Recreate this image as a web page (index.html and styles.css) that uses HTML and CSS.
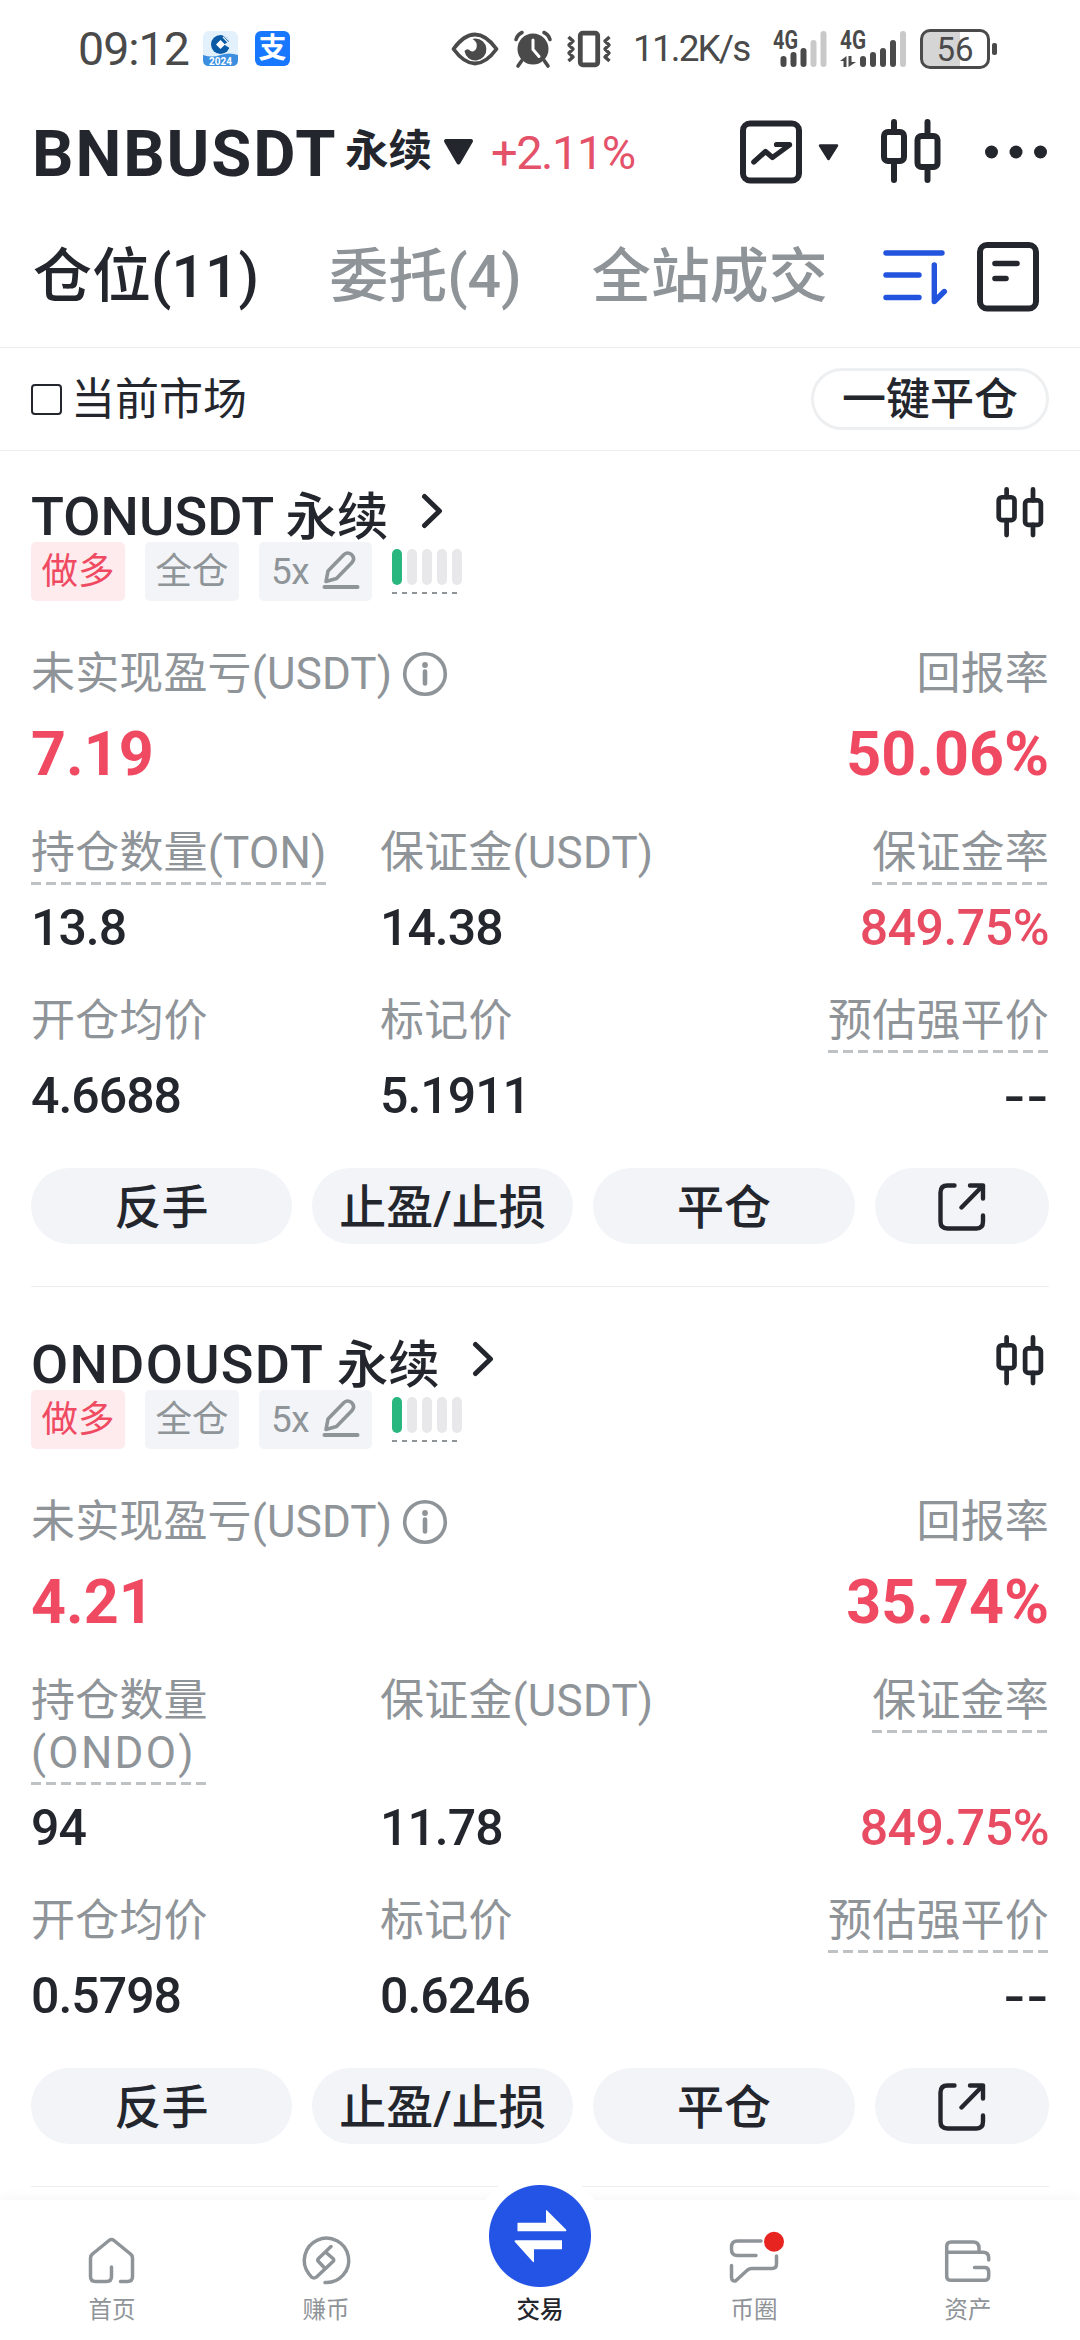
FILE: index.html
```html
<!DOCTYPE html>
<html lang="zh-CN">
<head>
<meta charset="utf-8">
<title>BNBUSDT 永续</title>
<link rel="stylesheet" href="styles.css">
</head>
<body>
<svg class="sprite" width="0" height="0" aria-hidden="true">
  <symbol id="candles" viewBox="0 0 60 66">
    <g fill="none" stroke="currentColor" stroke-width="6" stroke-linecap="round">
      <rect x="3" y="13" width="20" height="29" rx="4"/><path d="M13 3v10M13 42v19"/>
      <rect x="36.500" y="17" width="20" height="31" rx="4"/><path d="M46.500 3v14M46.500 48v13"/>
    </g>
  </symbol>
  <symbol id="chevron" viewBox="0 0 22 36"><path d="M3.500 3.500L18.500 18 3.500 32.500" fill="none" stroke="currentColor" stroke-width="5" stroke-linecap="round" stroke-linejoin="round"/></symbol>
  <symbol id="pencil" viewBox="0 0 38 40">
    <g fill="none" stroke="currentColor" stroke-linecap="round" stroke-linejoin="round">
      <path d="M4 31.500L6 21 22 4.500q3.500-3 7.500 0 4 4 .5 8L14.500 28.500z" stroke-width="3.600"/><path d="M2.500 37h33" stroke-width="4"/>
    </g>
  </symbol>
  <symbol id="info" viewBox="0 0 46 46">
    <circle cx="23" cy="23" r="20.300" fill="none" stroke="currentColor" stroke-width="3.600"/>
    <circle cx="23" cy="14" r="2.900" fill="currentColor"/><path d="M23 20.500v12" stroke="currentColor" stroke-width="4.600" stroke-linecap="round"/>
  </symbol>
  <symbol id="export" viewBox="0 0 48 48">
    <g fill="none" stroke="currentColor" stroke-width="4.400" stroke-linecap="round" stroke-linejoin="round">
      <path d="M16.500 2.500H9.500q-7 0-7 7v29q0 7 7 7h29q6.500 0 6.500-7V32.500M32 2.500h13v13M45 2.500L23.500 24.500"/>
    </g>
  </symbol>
</svg>

<div class="screen">
  <header class="status">
    <span class="clock">09:12</span>
    <svg class="app-bank" width="35" height="35" viewBox="0 0 35 35">
      <rect width="35" height="35" rx="6" fill="#e3f1fd"/><path d="M0 24q9 3 17.500 0t17.500 0v5q0 6-6 6H6q-6 0-6-6z" fill="#3c8fe0"/>
      <circle cx="17.500" cy="13.500" r="9.500" fill="#0b5aa6"/><path d="M20 6l7 7.500M20 3.500l7 7" stroke="#e3f1fd" stroke-width="1.200"/><path d="M21 13.500l8-5v10z" fill="#e3f1fd"/><path d="M17.500 9l4.500 4.500-4.500 4.500-4.500-4.500z" fill="#fff"/>
      <text x="17.500" y="33.500" text-anchor="middle" class="app-year">2024</text>
    </svg>
    <span class="app-pay">支</span>
    <div class="status-right">
      <svg width="48" height="36" viewBox="0 0 48 36"><path d="M2.500 18Q13 3.500 24 3.500T45.500 18Q35 32.500 24 32.500T2.500 18z" fill="none" stroke="#4a4a4a" stroke-width="3.800" stroke-linejoin="round"/><path d="M24 7.500a11 11 0 1 1-10.500 12.500q3-3.500 6 0 4 1.500 6-3 1.500-6-4-9z" fill="#4a4a4a"/></svg>
      <svg class="alarm" width="38" height="38" viewBox="0 0 38 38"><circle cx="19" cy="19" r="15.500" fill="#4a4a4a"/><path d="M19 10v9.500l6 7" fill="none" stroke="#fff" stroke-width="3" stroke-linecap="round"/><path d="M2 9.500q1.500-5 6-7M36 9.500q-1.500-5-6-7M7.500 31l-3.500 5M30.500 31l3.500 5" fill="none" stroke="#4a4a4a" stroke-width="3.600" stroke-linecap="round"/></svg>
      <svg class="vibrate" width="46" height="38" viewBox="0 0 46 38"><g fill="none" stroke="#4a4a4a" stroke-linejoin="round"><rect x="14.300" y="3.200" width="17.400" height="31.600" rx="2.500" stroke-width="4.800"/><path d="M2.500 7l4.500 4-4 4 4 4-4 4 4 4-4.500 4M43.500 7l-4.500 4 4 4-4 4 4 4-4 4 4.500 4" stroke-width="3.400"/></g></svg>
      <span class="speed">11.2K/s</span>
      <svg class="signal" width="54" height="38" viewBox="0 0 54 38"><text x="0" y="19" class="net" textLength="25" lengthAdjust="spacingAndGlyphs">4G</text>
        <g stroke="#4a4a4a" stroke-width="6" stroke-linecap="round"><path d="M10.500 29v5M20.500 25v9M30.500 21v13"/><path d="M40.500 13v21M50.500 4v30" stroke="#c9c9c9"/></g></svg>
      <svg class="signal-two" width="66" height="38" viewBox="0 0 66 38"><text x="0" y="19" class="net" textLength="26" lengthAdjust="spacingAndGlyphs">4G</text>
        <path d="M0 31l6.500-5v11H3.500v-6zM8.500 26h3v6H16l-7.500 5z" fill="#4a4a4a"/>
        <g stroke="#4a4a4a" stroke-width="6" stroke-linecap="round"><path d="M23 29v5M33 25v9M43 21v13M53 13v21"/><path d="M63 4v30" stroke="#c9c9c9"/></g></svg>
      <span class="battery">56</span><i class="battery-cap"></i>
    </div>
  </header>

  <div class="pair">
    <span class="pair-name">BNBUSDT</span><span class="pair-type">永续</span>
    <svg class="pair-caret" width="31" height="26" viewBox="0 0 31 26"><path d="M3 2h25L15.500 23.500z" fill="#24262d" stroke="#24262d" stroke-width="4" stroke-linejoin="round"/></svg>
    <span class="pair-change">+2.11%</span>
    <div class="pair-tools">
      <svg width="64" height="64" viewBox="0 0 64 64"><g fill="none" stroke="#24262d" stroke-linecap="round" stroke-linejoin="round"><rect x="4" y="3.500" width="56" height="57" rx="7" stroke-width="6"/><path d="M14.800 42l11.700-10.500 7 6L50.500 25M37.500 24.500h13" stroke-width="5.200"/></g></svg>
      <svg class="mini-caret" width="21" height="17" viewBox="0 0 21 17"><path d="M2 1.500h17L10.500 15z" fill="#24262d" stroke="#24262d" stroke-width="2.500" stroke-linejoin="round"/></svg>
      <svg class="tool-candles" width="60" height="66"><use href="#candles"/></svg>
      <svg class="tool-more" width="62" height="14" viewBox="0 0 62 14"><g fill="#24262d"><circle cx="6.500" cy="7" r="6.500"/><circle cx="31" cy="7" r="6.500"/><circle cx="55.500" cy="7" r="6.500"/></g></svg>
    </div>
  </div>

  <nav class="tabs">
    <span class="tab tab-on">仓位(11)</span><span class="tab">委托(4)</span><span class="tab">全站成交</span>
    <div class="tab-tools">
      <svg width="64" height="56" viewBox="0 0 64 56"><path d="M3 4h56M3 26h33M3 48.500h33M51.300 16v36.500l10-10" fill="none" stroke="#2354dd" stroke-width="5.400" stroke-linecap="round" stroke-linejoin="round"/></svg>
      <svg width="62" height="70" viewBox="0 0 62 70"><g fill="none" stroke="#24262d" stroke-linecap="round"><rect x="3" y="3" width="56" height="63.500" rx="7" stroke-width="6"/><path d="M18 21.500h22M18 36.500h11" stroke-width="5.600"/></g></svg>
    </div>
  </nav>

  <div class="filter">
    <i class="checkbox"></i><span class="filter-label">当前市场</span>
    <button class="close-all">一键平仓</button>
  </div>

  <main class="positions">
    <section class="card">
      <div class="card-head"><h2>TONUSDT <span class="kind">永续</span></h2><svg class="go" width="22" height="36"><use href="#chevron"/></svg><svg class="head-candles" width="48" height="52"><use href="#candles"/></svg></div>
      <div class="tags"><span class="tag tag-long">做多</span><span class="tag">全仓</span><span class="tag tag-lever">5x<svg width="38" height="40"><use href="#pencil"/></svg></span>
        <div class="risk"><div class="risk-bars"><i class="on"></i><i></i><i></i><i></i><i></i></div></div></div>
      <div class="line pnl-label"><span>未实现盈亏(USDT)</span><svg width="46" height="46"><use href="#info"/></svg><span class="end">回报率</span></div>
      <div class="line pnl"><span>7.19</span><span class="end">50.06%</span></div>
      <div class="facts facts-first">
        <span class="label"><b class="hint">持仓数量(TON)</b></span><span class="label">保证金(USDT)</span><span class="label"><b class="hint">保证金率</b></span>
        <span class="value">13.8</span><span class="value">14.38</span><span class="value value-up">849.75%</span>
      </div>
      <div class="facts">
        <span class="label">开仓均价</span><span class="label">标记价</span><span class="label"><b class="hint">预估强平价</b></span>
        <span class="value">4.6688</span><span class="value">5.1911</span><span class="value value-none">--</span>
      </div>
      <div class="actions"><button>反手</button><button>止盈/止损</button><button>平仓</button><button class="share"><svg width="48" height="48"><use href="#export"/></svg></button></div>
    </section>

    <section class="card">
      <div class="card-head"><h2 class="loose">ONDOUSDT <span class="kind">永续</span></h2><svg class="go" width="22" height="36"><use href="#chevron"/></svg><svg class="head-candles" width="48" height="52"><use href="#candles"/></svg></div>
      <div class="tags"><span class="tag tag-long">做多</span><span class="tag">全仓</span><span class="tag tag-lever">5x<svg width="38" height="40"><use href="#pencil"/></svg></span>
        <div class="risk"><div class="risk-bars"><i class="on"></i><i></i><i></i><i></i><i></i></div></div></div>
      <div class="line pnl-label"><span>未实现盈亏(USDT)</span><svg width="46" height="46"><use href="#info"/></svg><span class="end">回报率</span></div>
      <div class="line pnl"><span>4.21</span><span class="end">35.74%</span></div>
      <div class="facts facts-first">
        <span class="label"><b class="hint">持仓数量<br><span class="unit">(ONDO)</span></b></span><span class="label">保证金(USDT)</span><span class="label"><b class="hint">保证金率</b></span>
        <span class="value">94</span><span class="value">11.78</span><span class="value value-up">849.75%</span>
      </div>
      <div class="facts">
        <span class="label">开仓均价</span><span class="label">标记价</span><span class="label"><b class="hint">预估强平价</b></span>
        <span class="value">0.5798</span><span class="value">0.6246</span><span class="value value-none">--</span>
      </div>
      <div class="actions"><button>反手</button><button>止盈/止损</button><button>平仓</button><button class="share"><svg width="48" height="48"><use href="#export"/></svg></button></div>
    </section>
  </main>

  <footer class="navbar">
    <a class="nav-item"><svg width="48" height="48" viewBox="0 0 48 48"><path d="M23.500 31v9.500q0 5-5 5H7.500q-5 0-5-5V22q0-2.500 2-4L21 4.500q2.500-2 5 0L42.500 18q2 1.500 2 4v18.500q0 5-5 5H32.500"/></svg>首页</a>
    <a class="nav-item"><svg width="48" height="48" viewBox="0 0 48 48"><path d="M23 46.500A22.200 22.200 0 1 0 7 38l2.500 3q2.500 2 5 0L31 25.500q1.500-1.500 0-3L24 16.500M29 10.500L16.500 22.500q-1.500 1.500 0 3L23 32.500"/></svg>赚币</a>
    <a class="nav-item nav-trade"><span class="trade-disc"><svg width="102" height="102" viewBox="0 0 102 102"><path d="M28.500 37.700H57V26q0-1.500 1-.5L77 44.500q1 1.800-1 1.800H28.500zM73 55.300H27q-2.500 0-1 1.800L44 77q1 1 1-1V64.300H73z"/></svg></span>交易</a>
    <a class="nav-item"><svg width="48" height="48" viewBox="0 0 48 48"><path d="M31 5H7.500Q1.500 5 1.500 11v2.500q0 6 6 6H26M1.500 29.500V41q0 4.500 4 4l12-11q2-1.500 4-1.500H42q4.500 0 4.500-4.500V20"/><circle class="dot" cx="44" cy="5.700" r="10"/></svg>币圈</a>
    <a class="nav-item"><svg width="48" height="48" viewBox="0 0 48 48"><path d="M2.700 16.300V10.500q0-4.500 4.500-4.500H29q6 0 6 6v4.300M2.700 16.300H39q5.700 0 5.700 5.700v2M30.500 31.500H40.500q4.200 0 4.200 4.200v4.300q0 4.300-4.300 4.300H7q-4.300 0-4.300-4.300V16.300"/></svg>资产</a>
  </footer>
</div>
</body>
</html>
```
FILE: styles.css
```css
:root {
  --ink: #24262d;
  --gray: #8f9499;
  --red: #ef4a62;
  --blue: #2354e6;
  --fill: #f2f4f8;
  --line: #ececee;
}
* { box-sizing: border-box; }
body { margin: 0; background: #fff; }
.sprite { position: absolute; }
svg { display: block; flex: none; overflow: visible; }
button { border: 0; padding: 0; background: none; color: inherit; font: inherit; }

.screen {
  display: flex;
  flex-direction: column;
  width: 1080px;
  height: 2340px;
  overflow: hidden;
  color: var(--ink);
  font-family: Roboto, "Noto Sans CJK SC", sans-serif;
  white-space: nowrap;
}

/* status bar */
.status { display: flex; align-items: center; height: 97px; padding: 0 83px 0 78px; color: #4a4a4a; }
.clock { width: 125px; font-size: 46.500px; letter-spacing: -1px; line-height: 60px; }
.app-year { fill: #fff; font: 700 10px Roboto, sans-serif; }
.app-pay {
  width: 35px; height: 35px; margin-left: 17px; border-radius: 6px;
  background: #1777ff; color: #fff; font-size: 28px; font-weight: 700; line-height: 35px; text-align: center;
}
.status-right { display: flex; align-items: center; margin-left: auto; }
.alarm { margin-left: 15px; }
.vibrate { margin-left: 14px; }
.speed { width: 120px; margin-left: 21px; font-size: 37px; letter-spacing: -1.900px; }
.signal { margin-left: 20px; }
.signal-two { margin-left: 13px; }
.net { fill: #4a4a4a; font: 700 25px Roboto, sans-serif; }
.battery {
  width: 70px; height: 40px; margin-left: 14px; border: 3px solid #4a4a4a; border-radius: 10px;
  background: linear-gradient(90deg, #d5d5d5 58%, #fff 58%);
  font-size: 33px; line-height: 35px; text-align: center;
}
.battery-cap { width: 5px; height: 12px; margin-left: 2px; border-radius: 2px; background: #4a4a4a; }

/* trading pair */
.pair { display: flex; align-items: center; height: 110px; padding: 0 33px 0 32px; }
.pair-name { width: 313px; padding-top: 3px; font-size: 65px; font-weight: 700; letter-spacing: 1.900px; }
.pair-type { width: 98px; padding-bottom: 1px; font-size: 43.500px; font-weight: 700; line-height: 60px; }
.pair-change { margin-left: 17px; color: #e4526a; font-size: 47px; letter-spacing: -1.500px; }
.pair-tools { display: flex; align-items: center; margin-left: auto; }
.mini-caret { margin-left: 15px; }
.tool-candles { margin-left: 42px; }
.tool-more { margin-left: 44px; }

/* tabs */
.tabs { display: flex; align-items: center; height: 141px; padding: 0 41px 0 33px; border-bottom: 1px solid var(--line); }
.tab { color: var(--gray); font-size: 59px; font-weight: 500; line-height: 80px; }
.tab + .tab { margin-left: 70px; }
.tab-on { color: var(--ink); }
.tab-tools { display: flex; align-items: center; gap: 30px; margin-left: auto; }

/* market filter */
.filter { display: flex; align-items: center; height: 103px; padding: 0 31px; border-bottom: 1px solid var(--line); font-size: 44px; }
.checkbox { width: 31px; height: 31px; border: 2px solid var(--ink); border-radius: 4px; }
.filter-label { margin-left: 9px; padding-top: 2px; line-height: 60px; }
.close-all { width: 238px; height: 62px; padding-top: 2px; margin-left: auto; border: 3px solid #eeeff1; border-radius: 31px; font-weight: 500; line-height: 54px; }

/* position cards */
.positions { flex: 1; }
.card { margin: 0 31px; padding: 48px 0 42px; border-bottom: 1px solid var(--line); }
.card:first-child { padding-top: 36px; }
.card-head { display: flex; align-items: flex-start; height: 60px; }
.card-head h2 { margin: 0; font-size: 54px; font-weight: 500; line-height: 60px; letter-spacing: .100px; }
.card-head .loose { letter-spacing: 1.300px; }
.kind { margin-left: -1px; font-size: 51.500px; letter-spacing: 0; }
.go { margin: 6px 0 0 32px; }
.head-candles { margin: 0 5px 0 auto; }
.tags { display: flex; gap: 20px; height: 59px; margin-top: -5px; }
.tag {
  display: flex; align-items: center; justify-content: center; width: 94px; height: 59px; padding-top: 1px; border-radius: 5px;
  background: var(--fill); color: var(--gray); font-size: 36.500px; line-height: 58px;
}
.tag-long { background: #fdebee; color: var(--red); }
.tag-lever { width: 113px; gap: 13px; font-size: 37px; letter-spacing: -.500px; }
.tag-lever svg { margin-bottom: 5px; }
.risk {
  width: 72px; height: 52px; padding-top: 7px;
  background: repeating-linear-gradient(90deg, #8f9499 0 5px, transparent 5px 10px) 0 100% / 66px 2px no-repeat;
}
.risk-bars { display: flex; gap: 5px; }
.risk-bars i { width: 10px; height: 36px; border-radius: 5px; background: #e8e8eb; }
.risk-bars .on { background: #2ab67f; }

.line { display: flex; align-items: center; }
.end { margin-left: auto; }
.pnl-label { height: 46px; margin-top: 50px; color: var(--gray); font-size: 44px; letter-spacing: .150px; line-height: 46px; }
.pnl-label svg { margin-left: 10px; }
.pnl { height: 60px; margin-top: 27px; color: var(--red); font-size: 61px; font-weight: 700; line-height: 60px; }

.facts { display: grid; grid-template-columns: 349px 1fr auto; grid-template-rows: auto 60px; row-gap: 13px; margin-top: 37px; }
.facts-first { margin-top: 43px; }
.label { min-height: 58px; color: var(--gray); font-size: 44px; letter-spacing: .200px; line-height: 52px; }
.hint {
  display: inline-block; padding-bottom: 6px; font-weight: 400; vertical-align: top;
  background: repeating-linear-gradient(90deg, #bfc2c5 0 10px, transparent 10px 15px) 0 100% / 100% 3px no-repeat;
}
.unit { letter-spacing: 2.300px; }
.value { font-size: 50px; font-weight: 500; letter-spacing: -1px; line-height: 60px; }
.label:nth-child(3), .value:nth-child(6) { text-align: right; }
.value-up { color: #e84c63; letter-spacing: -.500px; }
.value-none { font-family: Inter, sans-serif; letter-spacing: 0; }

.actions { display: grid; grid-template-columns: 261px 261px 262px 1fr; gap: 20px; margin-top: 42px; }
.actions button {
  display: flex; align-items: center; justify-content: center; height: 76px; padding-top: 3px; border-radius: 38px;
  background: var(--fill); font-size: 47px; font-weight: 500; line-height: 73px;
}
.actions .share { padding-top: 1px; }

/* bottom navigation */
.navbar {
  display: grid; grid-template-columns: repeat(5, 1fr); height: 140px; padding: 36px 5px 0;
  background: #fff; box-shadow: 0 -4px 10px rgba(20, 30, 40, .030);
}
.nav-item { display: flex; flex-direction: column; align-items: center; color: var(--gray); font-size: 23.500px; line-height: 26px; }
.nav-item > svg { margin-bottom: 13px; fill: none; stroke: var(--gray); stroke-width: 3.500px; stroke-linecap: round; stroke-linejoin: round; }
.nav-item .dot { fill: #e82421; stroke: none; }
.nav-trade { color: var(--ink); font-weight: 500; }
.trade-disc {
  width: 130px; height: 130px; margin: -65px 0 -4px; padding: 14px; border-radius: 50%;
  background: radial-gradient(circle, var(--blue) 50.500px, #fff 51.500px);
}
.trade-disc svg { fill: #fff; }
```
